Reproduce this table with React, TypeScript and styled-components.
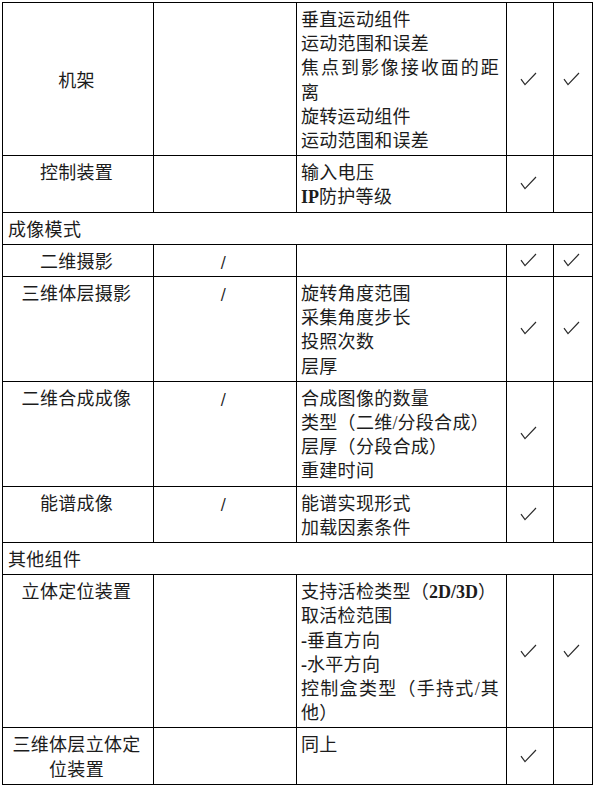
import React from "react";
import styled, { createGlobalStyle } from "styled-components";

const Global = createGlobalStyle`
  html, body { margin: 0; padding: 0; background: #ffffff; }
`;

const Table = styled.table`
  border-collapse: collapse;
  table-layout: fixed;
  width: 591px;
  margin: 2px 0 0 2px;
  font-family: "Noto Sans CJK SC", sans-serif;
  font-size: 18px;
  line-height: 24.2px;
  color: #1c1c1c;
`;

const Cell = styled.td<{ $align?: "left" | "center"; $valign?: "top" | "middle" }>`
  border: 1px solid #000;
  padding: 3px 7px 4px 4px;
  text-align: ${(p) => p.$align ?? "left"};
  vertical-align: ${(p) => p.$valign ?? "top"};
  font-family: "Noto Sans CJK SC", sans-serif;
  letter-spacing: 0.3px;
`;

const SectionCell = styled.td`
  border: 1px solid #000;
  padding: 3px 5px 4px;
  text-align: left;
  font-family: "Noto Sans CJK SC", sans-serif;
  letter-spacing: 0.3px;
`;

const Slash = styled.span`
  font-family: "DejaVu Sans", sans-serif;
  font-size: 15px;
  line-height: 1;
  color: #222;
`;

const Line = styled.div`
  text-align: justify;
`;

const Latin = styled.span<{ $bold?: boolean }>`
  font-family: "Liberation Serif", serif;
  font-weight: ${(p) => (p.$bold ? 700 : 400)};
  line-height: 1;
  letter-spacing: 0;
`;

const CheckMark = () => (
  <svg width="17" height="14" viewBox="0 0 17 14" style={{ display: "block", margin: "0 auto" }}>
    <path d="M1 7.2 L5 12.6 L16 1" fill="none" stroke="#2a2a2a" strokeWidth="1.2" strokeLinejoin="miter" />
  </svg>
);

type Row = {
  name: React.ReactNode;
  nameValign?: "top" | "middle";
  mid?: boolean;
  items: React.ReactNode[];
  c1?: boolean;
  c2?: boolean;
};

type Entry = { section: string } | Row;

const data: Entry[] = [
  {
    name: "机架",
    nameValign: "middle",
    items: ["垂直运动组件", "运动范围和误差", "焦点到影像接收面的距离", "旋转运动组件", "运动范围和误差"],
    c1: true,
    c2: true,
  },
  {
    name: "控制装置",
    items: [
      "输入电压",
      <>
        <Latin $bold>IP</Latin>防护等级
      </>,
    ],
    c1: true,
  },
  { section: "成像模式" },
  { name: "二维摄影", mid: true, items: [], c1: true, c2: true },
  {
    name: "三维体层摄影",
    mid: true,
    items: ["旋转角度范围", "采集角度步长", "投照次数", "层厚"],
    c1: true,
    c2: true,
  },
  {
    name: "二维合成成像",
    mid: true,
    items: [
      "合成图像的数量",
      <>
        类型（二维<Latin>/</Latin>分段合成）
      </>,
      "层厚（分段合成）",
      "重建时间",
    ],
    c1: true,
  },
  { name: "能谱成像", mid: true, items: ["能谱实现形式", "加载因素条件"], c1: true },
  { section: "其他组件" },
  {
    name: "立体定位装置",
    items: [
      <>
        支持活检类型（<Latin $bold>2D/3D</Latin>）
      </>,
      "取活检范围",
      <>
        <Latin $bold>-</Latin>垂直方向
      </>,
      <>
        <Latin $bold>-</Latin>水平方向
      </>,
      <>
        控制盒类型（手持式<Latin>/</Latin>其他）
      </>,
    ],
    c1: true,
    c2: true,
  },
  { name: "三维体层立体定位装置", items: ["同上"], c1: true },
];

export default function App() {
  return (
    <>
      <Global />
      <Table>
        <colgroup>
          <col style={{ width: 151 }} />
          <col style={{ width: 143 }} />
          <col style={{ width: 210 }} />
          <col style={{ width: 47 }} />
          <col style={{ width: 39 }} />
        </colgroup>
        <tbody>
          {data.map((e, i) =>
            "section" in e ? (
              <tr key={i}>
                <SectionCell colSpan={5}>{e.section}</SectionCell>
              </tr>
            ) : (
              <tr key={i}>
                <Cell $align="center" $valign={e.nameValign ?? "top"}>
                  {e.name}
                </Cell>
                <Cell $align="center">{e.mid ? <Slash>/</Slash> : null}</Cell>
                <Cell>
                  {e.items.map((it, j) => (
                    <Line key={j}>{it}</Line>
                  ))}
                </Cell>
                <Cell $align="center" $valign="middle">
                  {e.c1 ? <CheckMark /> : null}
                </Cell>
                <Cell $align="center" $valign="middle">
                  {e.c2 ? <CheckMark /> : null}
                </Cell>
              </tr>
            )
          )}
        </tbody>
      </Table>
    </>
  );
}
